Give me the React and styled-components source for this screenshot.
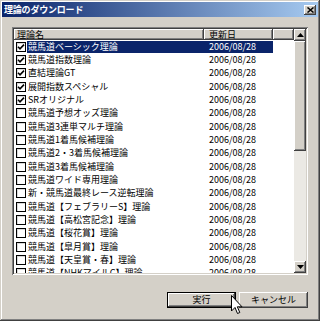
import styled, { createGlobalStyle, css } from "styled-components";

const GlobalStyle = createGlobalStyle`
    html, body {
        margin: 0;
        padding: 0;
        background: #d4d0c8;
    }
    * {
        box-sizing: border-box;
    }
`

const raised = css`
    background: #d4d0c8;
    box-shadow: inset -1px -1px #404040, inset 1px 1px #ffffff, inset -2px -2px #808080, inset 2px 2px #d4d0c8;
`

const Window = styled.div`
    position: relative;
    width: 320px;
    height: 321px;
    padding: 2px;
    background: #d4d0c8;
    box-shadow: inset -1px -1px #404040, inset 1px 1px #d4d0c8, inset -2px -2px #808080, inset 2px 2px #ffffff;
    font-family: "Noto Sans CJK JP", "Liberation Sans", sans-serif;
    font-size: 9px;
    color: #000;
    display: flex;
    flex-direction: column;
`

const TitleBar = styled.div`
    height: 15px;
    display: flex;
    align-items: center;
    justify-content: space-between;
    padding: 0 2px 0 2px;
    background: linear-gradient(to right, #0a246a, #a6caf0);
`

const Title = styled.div`
    color: #fff;
    font-weight: bold;
    font-size: 9px;
    line-height: 11px;
    letter-spacing: -0.2px;
`

const CloseButton = styled.div`
    ${raised};
    width: 12px;
    height: 10px;
    display: flex;
    align-items: center;
    justify-content: center;
`

const Content = styled.div`
    flex: 1;
    display: flex;
    flex-direction: column;
    padding: 10px 10px 11px 10px;
`

const ListFrame = styled.div`
    height: 248px;
    padding: 2px;
    background: #fff;
    box-shadow: inset 1px 1px #808080, inset -1px -1px #ffffff, inset 2px 2px #404040, inset -2px -2px #d4d0c8;
    display: flex;
`

const Table = styled.div`
    flex: 1;
    overflow: hidden;
    display: flex;
    flex-direction: column;
`

const HeaderRow = styled.div`
    display: flex;
    height: 11px;
    flex-shrink: 0;
`

const HeaderCell = styled.div`
    ${raised};
    width: ${p => p.$w ? `${p.$w}px` : "auto"};
    flex: ${p => p.$w ? "none" : 1};
    padding-left: ${p => p.$pad}px;
    line-height: 11px;
    white-space: nowrap;
`

const Row = styled.div`
    display: flex;
    align-items: center;
    height: 13.33px;
    flex-shrink: 0;
`

const CheckBox = styled.div`
    width: 10px;
    height: 10px;
    margin: 0 1px 0 2px;
    border: 1px solid #000;
    background: #fff;
    box-shadow: inset 1px 1px 0 rgba(0, 0, 0, 0.15);
    display: flex;
    align-items: center;
    justify-content: center;
`

const Body = styled.div`
    display: flex;
    width: 246px;
    height: 12px;
    align-items: center;
    background: ${p => p.$selected ? "#0a246a" : "transparent"};
    color: ${p => p.$selected ? "#fff" : "#000"};
`

const Name = styled.div`
    width: 177px;
    padding-left: 1px;
    white-space: nowrap;
    overflow: hidden;
    line-height: 12px;
`

const DateText = styled.div`
    flex: 1;
    padding-left: 5px;
    white-space: nowrap;
    line-height: 12px;
`

const ScrollBar = styled.div`
    width: 12px;
    display: flex;
    flex-direction: column;
`

const ScrollButton = styled.div`
    ${raised};
    height: 12px;
    display: flex;
    align-items: center;
    justify-content: center;
`

const Thumb = styled.div`
    ${raised};
    height: 110px;
`

const Track = styled.div`
    flex: 1;
    background: #ebe9e4;
`

const ButtonRow = styled.div`
    display: flex;
    justify-content: flex-end;
    gap: 3px;
    margin-top: 17px;
`

const Button = styled.div`
    ${raised};
    width: 69px;
    height: 16px;
    display: flex;
    align-items: center;
    justify-content: center;
    line-height: 12px;
    ${p => p.$default && css`
        box-shadow: inset 0 0 0 1px #000, inset -2px -2px #404040, inset 2px 2px #ffffff, inset -3px -3px #808080;
    `}
`

const Cursor = styled.svg`
    position: absolute;
    left: 231px;
    top: 295px;
`

const items = [
    { name: "競馬道ベーシック理論", checked: true, selected: true },
    { name: "競馬道指数理論", checked: true },
    { name: "直結理論GT", checked: true },
    { name: "展開指数スペシャル", checked: true },
    { name: "SRオリジナル", checked: true },
    { name: "競馬道予想オッズ理論" },
    { name: "競馬道3連単マルチ理論" },
    { name: "競馬道1着馬候補理論" },
    { name: "競馬道2・3着馬候補理論" },
    { name: "競馬道3着馬候補理論" },
    { name: "競馬道ワイド専用理論" },
    { name: "新・競馬道最終レース逆転理論" },
    { name: "競馬道【フェブラリーS】理論" },
    { name: "競馬道【高松宮記念】理論" },
    { name: "競馬道【桜花賞】理論" },
    { name: "競馬道【皐月賞】理論" },
    { name: "競馬道【天皇賞・春】理論" },
    { name: "競馬道【NHKマイルC】理論" },
]

const Check = () => (
    <svg width="8" height="8" viewBox="0 0 8 8">
        <path d="M1 3.8 L3 5.8 L7 1.6" fill="none" stroke="#000" strokeWidth="1.6" />
    </svg>
)

const Arrow = ({ down }) => (
    <svg width="7" height="4" viewBox="0 0 7 4">
        <path d={down ? "M0 0 H7 L3.5 4 Z" : "M0 4 H7 L3.5 0 Z"} fill="#000" />
    </svg>
)

const App = () => {
    return (
        <Window>
            <GlobalStyle />
            <TitleBar>
                <Title>理論のダウンロード</Title>
                <CloseButton>
                    <svg width="7" height="6" viewBox="0 0 7 6">
                        <path d="M0.5 0.5 L6.5 5.5 M6.5 0.5 L0.5 5.5" stroke="#000" strokeWidth="1.5" />
                    </svg>
                </CloseButton>
            </TitleBar>
            <Content>
                <ListFrame>
                    <Table>
                        <HeaderRow>
                            <HeaderCell $w={190} $pad={3}>理論名</HeaderCell>
                            <HeaderCell $w={69} $pad={5}>更新日</HeaderCell>
                            <HeaderCell />
                        </HeaderRow>
                        {items.map(item => (
                            <Row key={item.name}>
                                <CheckBox>{item.checked && <Check />}</CheckBox>
                                <Body $selected={item.selected}>
                                    <Name>{item.name}</Name>
                                    <DateText>2006/08/28</DateText>
                                </Body>
                            </Row>
                        ))}
                    </Table>
                    <ScrollBar>
                        <ScrollButton><Arrow /></ScrollButton>
                        <Thumb />
                        <Track />
                        <ScrollButton><Arrow down /></ScrollButton>
                    </ScrollBar>
                </ListFrame>
                <ButtonRow>
                    <Button $default>実行</Button>
                    <Button>キャンセル</Button>
                </ButtonRow>
            </Content>
            <Cursor width="12" height="20" viewBox="0 0 12 20">
                <path d="M0.5 0.5 V16 L4 12.5 L6.5 18.5 L8.8 17.5 L6.3 11.8 H11 Z" fill="#fff" stroke="#000" strokeWidth="1" />
            </Cursor>
        </Window>
    );
}
export default App;
